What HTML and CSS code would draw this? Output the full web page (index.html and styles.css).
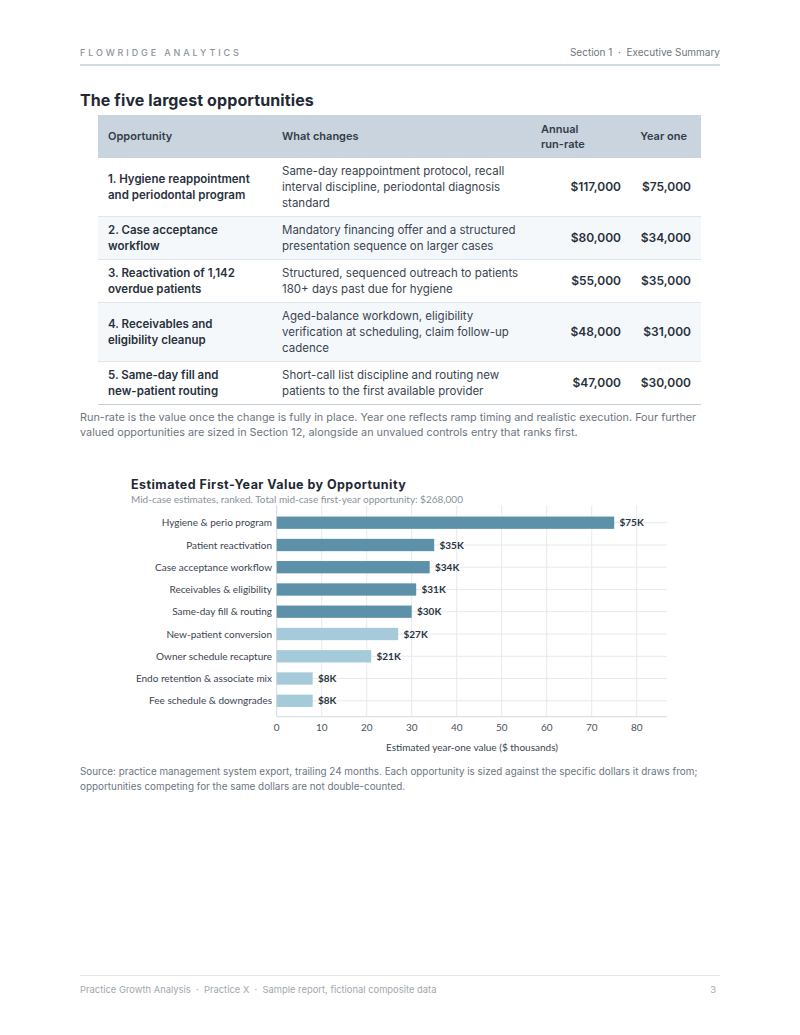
FILE: index.html
```html
<!DOCTYPE html>
<html lang="en">
<head>
<meta charset="utf-8">
<title>The five largest opportunities</title>
<link rel="stylesheet" href="styles.css">
</head>
<body>
<div class="page">
  <header class="top">
    <span class="brand">FLOWRIDGE ANALYTICS</span>
    <span class="section">Section 1 &nbsp;·&nbsp; Executive Summary</span>
  </header>

  <h1 class="title">The five largest opportunities</h1>

  <table class="opps">
    <thead>
      <tr>
        <th class="c-opp">Opportunity</th>
        <th class="c-what">What changes</th>
        <th class="c-run">Annual<br>run-rate</th>
        <th class="c-year">Year one</th>
      </tr>
    </thead>
    <tbody>
      <tr class="tall">
        <td class="c-opp">1. Hygiene reappointment and periodontal program</td>
        <td class="c-what">Same-day reappointment protocol, recall interval discipline, periodontal diagnosis standard</td>
        <td class="num run">$117,000</td>
        <td class="num year">$75,000</td>
      </tr>
      <tr class="alt">
        <td class="c-opp">2. Case acceptance workflow</td>
        <td class="c-what">Mandatory financing offer and a structured presentation sequence on larger cases</td>
        <td class="num run">$80,000</td>
        <td class="num year">$34,000</td>
      </tr>
      <tr>
        <td class="c-opp">3. Reactivation of 1,142 overdue patients</td>
        <td class="c-what">Structured, sequenced outreach to patients 180+ days past due for hygiene</td>
        <td class="num run">$55,000</td>
        <td class="num year">$35,000</td>
      </tr>
      <tr class="alt tall">
        <td class="c-opp">4. Receivables and eligibility cleanup</td>
        <td class="c-what">Aged-balance workdown, eligibility verification at scheduling, claim follow-up cadence</td>
        <td class="num run">$48,000</td>
        <td class="num year">$31,000</td>
      </tr>
      <tr>
        <td class="c-opp">5. Same-day fill and<br>new-patient routing</td>
        <td class="c-what">Short-call list discipline and routing new patients to the first available provider</td>
        <td class="num run">$47,000</td>
        <td class="num year">$30,000</td>
      </tr>
    </tbody>
  </table>

  <p class="note">Run-rate is the value once the change is fully in place. Year one reflects ramp timing and realistic execution. Four further valued opportunities are sized in Section 12, alongside an unvalued controls entry that ranks first.</p>

  <figure class="chart">
    <svg width="640" height="284" viewBox="0 0 640 284" xmlns="http://www.w3.org/2000/svg">
      <text class="ch-title" x="51" y="16">Estimated First-Year Value by Opportunity</text>
      <text class="ch-sub" x="51" y="29.5">Mid-case estimates, ranked. Total mid-case first-year opportunity: $268,000</text>

      <g class="grid">
        <line x1="241.7" y1="32.3" x2="241.7" y2="243.7"/>
        <line x1="286.7" y1="32.3" x2="286.7" y2="243.7"/>
        <line x1="331.7" y1="32.3" x2="331.7" y2="243.7"/>
        <line x1="376.7" y1="32.3" x2="376.7" y2="243.7"/>
        <line x1="421.7" y1="32.3" x2="421.7" y2="243.7"/>
        <line x1="466.7" y1="32.3" x2="466.7" y2="243.7"/>
        <line x1="511.7" y1="32.3" x2="511.7" y2="243.7"/>
        <line x1="556.7" y1="32.3" x2="556.7" y2="243.7"/>
        <line x1="196.7" y1="49.7" x2="587" y2="49.7"/>
        <line x1="196.7" y1="72" x2="587" y2="72"/>
        <line x1="196.7" y1="94.2" x2="587" y2="94.2"/>
        <line x1="196.7" y1="116.5" x2="587" y2="116.5"/>
        <line x1="196.7" y1="138.7" x2="587" y2="138.7"/>
        <line x1="196.7" y1="161" x2="587" y2="161"/>
        <line x1="196.7" y1="183.3" x2="587" y2="183.3"/>
        <line x1="196.7" y1="205.5" x2="587" y2="205.5"/>
        <line x1="196.7" y1="227.8" x2="587" y2="227.8"/>
      </g>
      <g class="axis">
        <line x1="196.7" y1="32.3" x2="196.7" y2="243.7"/>
        <line x1="196.7" y1="243.7" x2="587" y2="243.7"/>
      </g>

      <g class="bars">
        <rect class="dark" x="196.7" y="43.55" width="337.5" height="12.3"/>
        <rect class="dark" x="196.7" y="65.85" width="157.5" height="12.3"/>
        <rect class="dark" x="196.7" y="88.05" width="153" height="12.3"/>
        <rect class="dark" x="196.7" y="110.35" width="139.5" height="12.3"/>
        <rect class="dark" x="196.7" y="132.55" width="135" height="12.3"/>
        <rect class="light" x="196.7" y="154.85" width="121.5" height="12.3"/>
        <rect class="light" x="196.7" y="177.15" width="94.5" height="12.3"/>
        <rect class="light" x="196.7" y="199.35" width="36" height="12.3"/>
        <rect class="light" x="196.7" y="221.65" width="36" height="12.3"/>
      </g>

      <g class="cats">
        <text x="192" y="53.2">Hygiene &amp; perio program</text>
        <text x="192" y="75.5">Patient reactivation</text>
        <text x="192" y="97.7">Case acceptance workflow</text>
        <text x="192" y="120">Receivables &amp; eligibility</text>
        <text x="192" y="142.2">Same-day fill &amp; routing</text>
        <text x="192" y="164.5">New-patient conversion</text>
        <text x="192" y="186.8">Owner schedule recapture</text>
        <text x="192" y="209">Endo retention &amp; associate mix</text>
        <text x="192" y="231.3">Fee schedule &amp; downgrades</text>
      </g>

      <g class="vals">
        <text x="539.5" y="53.2">$75K</text>
        <text x="359.5" y="75.5">$35K</text>
        <text x="355" y="97.7">$34K</text>
        <text x="341.5" y="120">$31K</text>
        <text x="337" y="142.2">$30K</text>
        <text x="323.5" y="164.5">$27K</text>
        <text x="296.5" y="186.8">$21K</text>
        <text x="238" y="209">$8K</text>
        <text x="238" y="231.3">$8K</text>
      </g>

      <g class="ticks">
        <text x="196.7" y="258.2">0</text>
        <text x="241.7" y="258.2">10</text>
        <text x="286.7" y="258.2">20</text>
        <text x="331.7" y="258.2">30</text>
        <text x="376.7" y="258.2">40</text>
        <text x="421.7" y="258.2">50</text>
        <text x="466.7" y="258.2">60</text>
        <text x="511.7" y="258.2">70</text>
        <text x="556.7" y="258.2">80</text>
      </g>
      <text class="ax-title" x="392" y="277.5">Estimated year-one value ($ thousands)</text>
    </svg>
  </figure>

  <p class="note source">Source: practice management system export, trailing 24 months. Each opportunity is sized against the specific dollars it draws from; opportunities competing for the same dollars are not double-counted.</p>

  <footer class="bottom">
    <span>Practice Growth Analysis &nbsp;·&nbsp; Practice X &nbsp;·&nbsp; Sample report, fictional composite data</span>
    <span>3</span>
  </footer>
</div>
</body>
</html>
```

FILE: styles.css
```css
* { box-sizing: border-box; }

html, body {
  margin: 0;
  padding: 0;
  background: #ffffff;
}

body {
  font-family: "Inter", "Liberation Sans", sans-serif;
  color: #2b3440;
}

.page {
  width: 800px;
  height: 1035px;
  padding: 46px 80px 39px;
  display: flex;
  flex-direction: column;
}

.top {
  display: flex;
  justify-content: space-between;
  align-items: center;
  font-size: 10px;
  line-height: 13px;
  padding-bottom: 5px;
  border-bottom: 2px solid #cfdde2;
}

.brand {
  color: #8d949c;
  letter-spacing: 2.9px;
  font-size: 9px;
  font-weight: 500;
}

.section {
  color: #6e7680;
}

.title {
  margin: 24px 0 5px;
  font-size: 16px;
  line-height: 20px;
  font-weight: 700;
  letter-spacing: 0.1px;
  color: #1f2935;
}

.opps {
  margin: 0 19px 0 18px;
  width: 603px;
  border-collapse: collapse;
  table-layout: fixed;
  font-size: 11.5px;
  line-height: 16px;
}

.opps th {
  background: #cad4de;
  color: #333c48;
  font-weight: 600;
  font-size: 11px;
  line-height: 15px;
  text-align: left;
  height: 43px;
  padding: 4px 10px;
  vertical-align: middle;
}

.opps th.c-year {
  text-align: right;
  padding-right: 14px;
  white-space: nowrap;
}

.c-opp { width: 174px; }
.c-what { width: 259px; }
.c-run { width: 95px; }
.c-year { width: 75px; }

.opps tbody tr { height: 43px; }
.opps tbody tr.tall { height: 58.5px; }

.opps td {
  padding: 4px 10px;
  vertical-align: middle;
  border-bottom: 1px solid #dfe5ec;
  color: #3a4450;
}

.opps tbody tr:last-child td { border-bottom: 1px solid #c6ced7; }

.opps td.c-opp {
  font-weight: 600;
  color: #28313c;
}

.opps td.num {
  text-align: right;
  font-weight: 600;
  font-size: 12px;
  color: #28313c;
  white-space: nowrap;
}

.opps td.run { padding-right: 5px; }
.opps td.year { padding-right: 10px; }

.opps tr.alt td { background: #f5f8fb; }

.note {
  margin: 5px 0 0;
  font-size: 10.85px;
  line-height: 15px;
  color: #6c7580;
}

.chart {
  margin: 33px 0 0;
  padding: 0;
}

.chart svg { display: block; }

.ch-title {
  font-family: "Inter", sans-serif;
  font-weight: 700;
  font-size: 12.5px;
  letter-spacing: 0.45px;
  fill: #1f2935;
}

.ch-sub {
  font-family: "Lato", "Inter", sans-serif;
  font-size: 10px;
  fill: #8a929b;
}

.grid line { stroke: #e6e9ef; stroke-width: 1; }
.axis line { stroke: #d4d9e0; stroke-width: 1; }

.bars .dark { fill: #5d90a9; }
.bars .light { fill: #a5cad9; }

.cats text {
  font-family: "Lato", "Inter", sans-serif;
  font-size: 10px;
  fill: #3a4350;
  text-anchor: end;
}

.vals text {
  font-family: "Lato", "Inter", sans-serif;
  font-size: 10px;
  font-weight: 700;
  fill: #2a333e;
}

.ticks text {
  font-family: "Lato", "Inter", sans-serif;
  font-size: 10px;
  fill: #4a525c;
  text-anchor: middle;
}

.ax-title {
  font-family: "Lato", "Inter", sans-serif;
  font-size: 10px;
  fill: #3a4350;
  text-anchor: middle;
}

.note.source {
  margin-top: 7px;
  font-size: 9.9px;
}

.bottom {
  margin-top: auto;
  display: flex;
  justify-content: space-between;
  font-size: 9.4px;
  line-height: 13px;
  color: #a1a7ae;
  border-top: 1px solid #e4e8ec;
  padding: 7px 4px 0 0;
}
```
